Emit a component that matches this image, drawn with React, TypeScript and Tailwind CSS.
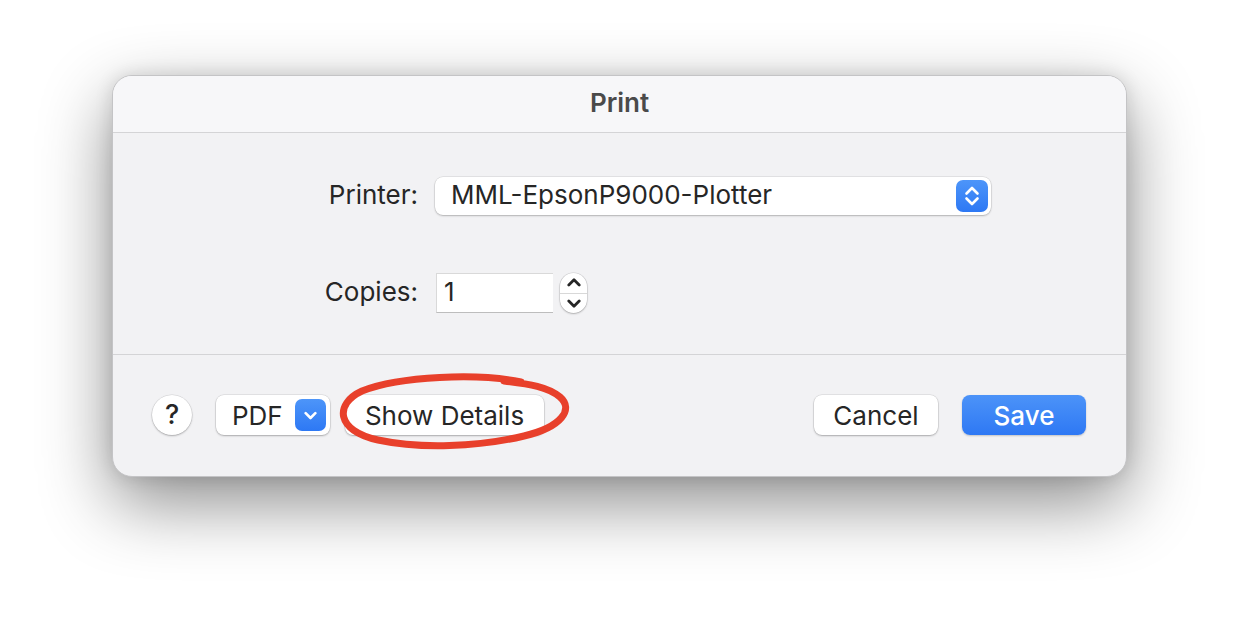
import React from "react";

function UpDown({ className }: { className?: string }) {
  return (
    <svg viewBox="0 0 16 22" className={className} fill="none" stroke="currentColor" strokeWidth={2.6} strokeLinecap="round" strokeLinejoin="round">
      <path d="M2.5 8.5 L8 3 L13.5 8.5" />
      <path d="M2.5 13.5 L8 19 L13.5 13.5" />
    </svg>
  );
}

function Chevron({ up, className }: { up?: boolean; className?: string }) {
  return (
    <svg viewBox="0 0 14 9" className={className} fill="none" stroke="currentColor" strokeWidth={2.8} strokeLinecap="round" strokeLinejoin="round">
      {up ? <path d="M1.8 7 L7 1.8 L12.2 7" /> : <path d="M1.8 2 L7 7.2 L12.2 2" />}
    </svg>
  );
}

const btn =
  "h-[40px] rounded-[8px] bg-white shadow-[0_0_0_0.5px_rgba(0,0,0,0.12),0_1px_2px_rgba(0,0,0,0.25)] flex items-center text-[26px] text-[#262626]";

export default function App() {
  return (
    <div
      className="relative w-[1238px] h-[624px] bg-white overflow-hidden pt-[75px] pl-[112px]"
      style={{ fontFamily: "Inter, 'Noto Sans', sans-serif" }}
    >
      {/* dialog */}
      <div className="w-[1015px] h-[402px] rounded-[20px] overflow-hidden bg-[#f2f2f4] border border-[#c4c4c6] shadow-[0_26px_70px_rgba(0,0,0,0.45),0_0_18px_rgba(0,0,0,0.12)] flex flex-col">
        {/* title */}
        <div className="h-[57px] shrink-0 bg-[#f7f7f9] border-b border-[#d4d4d6] flex items-center justify-center">
          <span className="text-[26px] leading-[32px] font-semibold text-[#4a4a4a] pb-[2px]">Print</span>
        </div>

        {/* body */}
        <div className="h-[222px] shrink-0 border-b border-[#d4d4d6] pt-[44px] flex flex-col gap-[58px]">
          <div className="flex items-center">
            <div className="w-[305px] text-right text-[26px] leading-[32px] text-[#262626] pb-[3px]">Printer:</div>
            <div className="ml-[17px] w-[556px] h-[38px] rounded-[8px] bg-white shadow-[0_0_0_0.5px_rgba(0,0,0,0.12),0_1px_2px_rgba(0,0,0,0.22)] flex items-center justify-between pl-[16px] pr-[3px]">
              <span className="text-[26px] leading-[32px] text-[#262626] pb-[3px]">MML-EpsonP9000-Plotter</span>
              <div className="w-[32px] h-[32px] rounded-[7px] bg-gradient-to-b from-[#4d95f9] to-[#2d78f4] flex items-center justify-center text-white">
                <UpDown className="w-[16px] h-[22px]" />
              </div>
            </div>
          </div>
          <div className="flex items-center">
            <div className="w-[305px] text-right text-[26px] leading-[32px] text-[#262626] pb-[2px]">Copies:</div>
            <div className="ml-[18px] w-[117px] h-[40px] bg-white border-l border-t border-[#d9d9d9] border-b-[1.5px] border-b-[#bdbdbd] flex items-center pl-[7px] pb-[2px] text-[26px] leading-[32px] text-[#262626]">
              1
            </div>
            <div className="ml-[7px] w-[27px] h-[40px] rounded-full bg-white shadow-[0_0_0_0.5px_rgba(0,0,0,0.14),0_1px_2px_rgba(0,0,0,0.22)] flex flex-col items-center text-[#262626]">
              <div className="flex-1 flex items-center justify-center">
                <Chevron up className="w-[14px] h-[9px]" />
              </div>
              <div className="w-full h-px bg-[#d8d8d8]" />
              <div className="flex-1 flex items-center justify-center">
                <Chevron className="w-[14px] h-[9px]" />
              </div>
            </div>
          </div>
        </div>

        {/* footer */}
        <div className="flex-1 flex items-center pl-[39px] pr-[40px] pb-[1px]">
          <div className="w-[40px] h-[40px] rounded-full bg-white shadow-[0_0_0_0.5px_rgba(0,0,0,0.12),0_1px_2px_rgba(0,0,0,0.25)] flex items-center justify-center text-[27px] font-medium text-[#262626]">
            ?
          </div>
          <div className={`${btn} ml-[24px] w-[114px] justify-between pl-[16px] pr-[4px]`}>
            <span>PDF</span>
            <div className="w-[31px] h-[32px] rounded-[7px] bg-gradient-to-b from-[#4d95f9] to-[#2d78f4] flex items-center justify-center text-white">
              <Chevron className="w-[13px] h-[9px]" />
            </div>
          </div>
          <div className={`${btn} ml-[15px] w-[199px] justify-center`}>Show Details</div>
          <div className="flex-1" />
          <div className={`${btn} w-[124px] justify-center`}>Cancel</div>
          <div className="ml-[24px] w-[124px] h-[40px] rounded-[8px] bg-gradient-to-b from-[#4c93f8] to-[#2e78f4] shadow-[0_1px_2px_rgba(0,0,0,0.2)] flex items-center justify-center text-[26px] font-medium text-white">
            Save
          </div>
        </div>
      </div>

      {/* red annotation */}
      <svg className="absolute left-0 top-0 pointer-events-none" width={1238} height={624} viewBox="0 0 1238 624" fill="none">
        <path
          d="M521 382 C 478 373, 400 376, 362 391 C 334 404, 336 431, 378 440 C 420 449, 478 447, 524 436 C 562 427, 574 409, 560 397 C 548 387, 530 384, 504 381"
          stroke="#e8402b"
          strokeWidth={7}
          strokeLinecap="round"
          strokeLinejoin="round"
        />
      </svg>
    </div>
  );
}
